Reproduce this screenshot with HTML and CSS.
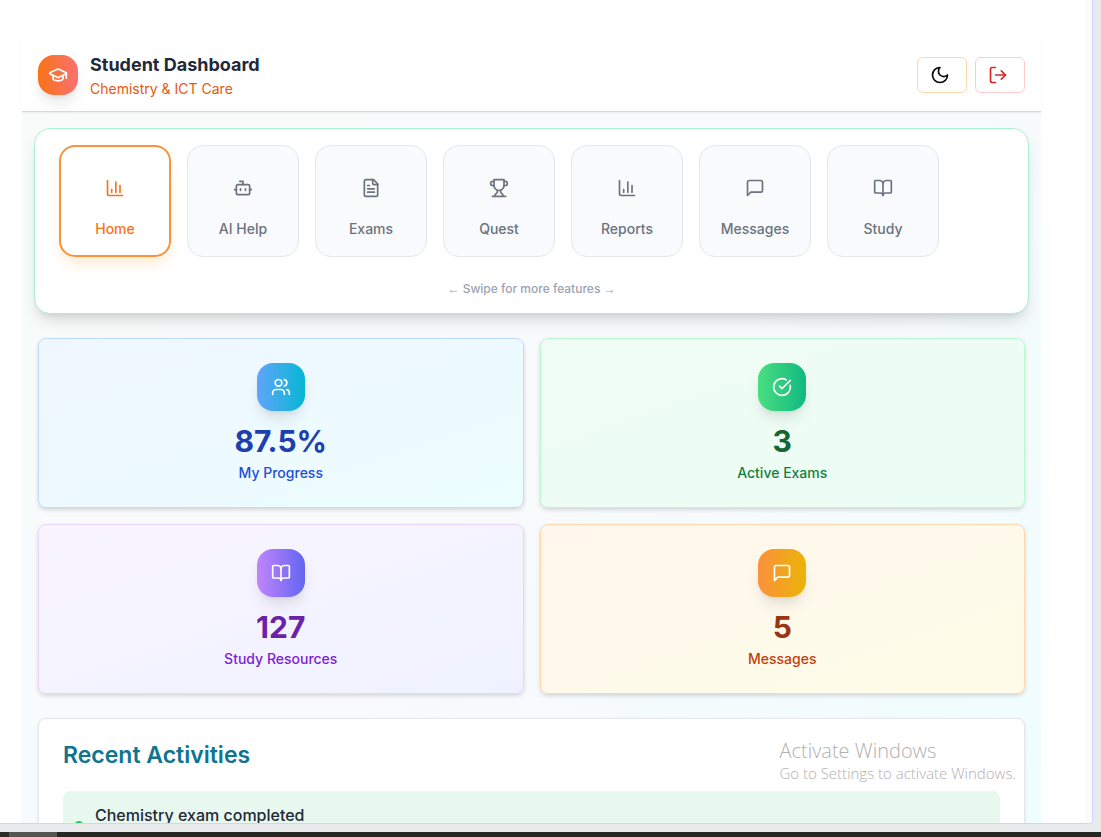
FILE: index.html
```html
<!DOCTYPE html>
<html lang="en">
<head>
<meta charset="utf-8">
<meta name="viewport" content="width=device-width, initial-scale=1">
<title>Student Dashboard</title>
<link rel="stylesheet" href="styles.css">
</head>
<body>
<svg class="defs" aria-hidden="true">
  <symbol id="i-chart" viewBox="0 0 24 24"><path d="M3 3v16a2 2 0 0 0 2 2h16"/><path d="M18 17V9"/><path d="M13 17V5"/><path d="M8 17v-3"/></symbol>
  <symbol id="i-bot" viewBox="0 0 24 24"><path d="M12 8V4H8"/><rect width="16" height="12" x="4" y="8" rx="2"/><path d="M2 14h2"/><path d="M20 14h2"/><path d="M15 13v2"/><path d="M9 13v2"/></symbol>
  <symbol id="i-file" viewBox="0 0 24 24"><path d="M15 2H6a2 2 0 0 0-2 2v16a2 2 0 0 0 2 2h12a2 2 0 0 0 2-2V7Z"/><path d="M14 2v4a2 2 0 0 0 2 2h4"/><path d="M10 9H8"/><path d="M16 13H8"/><path d="M16 17H8"/></symbol>
  <symbol id="i-trophy" viewBox="0 0 24 24"><path d="M6 9H4.5a2.5 2.5 0 0 1 0-5H6"/><path d="M18 9h1.500a2.500 2.500 0 0 0 0-5H18"/><path d="M4 22h16"/><path d="M10 14.660V17c0 .550-.470.980-.970 1.210C7.850 18.750 7 20.240 7 22"/><path d="M14 14.660V17c0 .550.470.980.970 1.210C16.150 18.750 17 20.240 17 22"/><path d="M18 2H6v7a6 6 0 0 0 12 0V2Z"/></symbol>
  <symbol id="i-message" viewBox="0 0 24 24"><path d="M21 15a2 2 0 0 1-2 2H7l-4 4V5a2 2 0 0 1 2-2h14a2 2 0 0 1 2 2z"/></symbol>
  <symbol id="i-book" viewBox="0 0 24 24"><path d="M12 7v14"/><path d="M3 18a1 1 0 0 1-1-1V4a1 1 0 0 1 1-1h5a4 4 0 0 1 4 4 4 4 0 0 1 4-4h5a1 1 0 0 1 1 1v13a1 1 0 0 1-1 1h-6a3 3 0 0 0-3 3 3 3 0 0 0-3-3z"/></symbol>
  <symbol id="i-users" viewBox="0 0 24 24"><path d="M16 21v-2a4 4 0 0 0-4-4H6a4 4 0 0 0-4 4v2"/><circle cx="9" cy="7" r="4"/><path d="M22 21v-2a4 4 0 0 0-3-3.870"/><path d="M16 3.130a4 4 0 0 1 0 7.750"/></symbol>
  <symbol id="i-check" viewBox="0 0 24 24"><path d="M21.801 10A10 10 0 1 1 17 3.335"/><path d="m9 11 3 3L22 4"/></symbol>
  <symbol id="i-cap" viewBox="0 0 24 24"><path d="M21.420 10.922a1 1 0 0 0-.019-1.838L12.830 5.180a2 2 0 0 0-1.660 0L2.600 9.080a1 1 0 0 0 0 1.832l8.570 3.908a2 2 0 0 0 1.660 0z"/><path d="M22 10v6"/><path d="M6 12.500V16a6 3 0 0 0 12 0v-3.500"/></symbol>
  <symbol id="i-moon" viewBox="0 0 24 24"><path d="M12 3a6 6 0 0 0 9 9 9 9 0 1 1-9-9Z"/></symbol>
  <symbol id="i-logout" viewBox="0 0 24 24"><path d="M9 21H5a2 2 0 0 1-2-2V5a2 2 0 0 1 2-2h4"/><path d="m16 17 5-5-5-5"/><path d="M21 12H9"/></symbol>
</svg>

<div class="screen">
  <div class="window">
    <div class="scroller">
      <div class="dashboard">
        <header class="header">
          <div class="logo"><svg class="icon"><use href="#i-cap"/></svg></div>
          <div class="brand">
            <h1 class="brand-title">Student Dashboard</h1>
            <p class="brand-sub">Chemistry &amp; ICT Care</p>
          </div>
          <div class="header-actions">
            <button class="tool tool-theme" type="button" aria-label="Toggle theme"><svg class="icon"><use href="#i-moon"/></svg></button>
            <button class="tool tool-logout" type="button" aria-label="Log out"><svg class="icon"><use href="#i-logout"/></svg></button>
          </div>
        </header>

        <main class="content">
          <nav class="nav-card">
            <div class="nav-list">
              <button class="nav-item active" type="button"><svg class="icon"><use href="#i-chart"/></svg><span>Home</span></button>
              <button class="nav-item" type="button"><svg class="icon"><use href="#i-bot"/></svg><span>AI Help</span></button>
              <button class="nav-item" type="button"><svg class="icon"><use href="#i-file"/></svg><span>Exams</span></button>
              <button class="nav-item" type="button"><svg class="icon"><use href="#i-trophy"/></svg><span>Quest</span></button>
              <button class="nav-item" type="button"><svg class="icon"><use href="#i-chart"/></svg><span>Reports</span></button>
              <button class="nav-item" type="button"><svg class="icon"><use href="#i-message"/></svg><span>Messages</span></button>
              <button class="nav-item" type="button"><svg class="icon"><use href="#i-book"/></svg><span>Study</span></button>
            </div>
            <p class="nav-hint"><span class="arrow">←</span> Swipe for more features <span class="arrow">→</span></p>
          </nav>

          <section class="stats">
            <article class="stat blue">
              <div class="stat-icon"><svg class="icon"><use href="#i-users"/></svg></div>
              <p class="stat-value">87.5%</p>
              <p class="stat-label">My Progress</p>
            </article>
            <article class="stat green">
              <div class="stat-icon"><svg class="icon"><use href="#i-check"/></svg></div>
              <p class="stat-value">3</p>
              <p class="stat-label">Active Exams</p>
            </article>
            <article class="stat purple">
              <div class="stat-icon"><svg class="icon"><use href="#i-book"/></svg></div>
              <p class="stat-value">127</p>
              <p class="stat-label">Study Resources</p>
            </article>
            <article class="stat orange">
              <div class="stat-icon"><svg class="icon"><use href="#i-message"/></svg></div>
              <p class="stat-value">5</p>
              <p class="stat-label">Messages</p>
            </article>
          </section>

          <section class="activities">
            <h2 class="activities-title">Recent Activities</h2>
            <div class="activity">
              <span class="activity-dot"></span>
              <p class="activity-text">Chemistry exam completed</p>
            </div>
          </section>
        </main>
      </div>
    </div>
    <div class="track"></div>
  </div>
  <div class="taskbar"></div>
  <div class="watermark">
    <p class="watermark-title">Activate Windows</p>
    <p class="watermark-text">Go to Settings to activate Windows.</p>
  </div>
</div>
</body>
</html>
```
FILE: styles.css
```css
* { box-sizing: border-box; margin: 0; }
body { font-family: Inter, "Liberation Sans", sans-serif; font-size: 16px; line-height: 24px; color: #1f2937; }
button { font: inherit; cursor: pointer; }
.defs { position: absolute; width: 0; height: 0; }
.icon { width: 20px; height: 20px; flex: none; fill: none; stroke: currentColor; stroke-width: 2; stroke-linecap: round; stroke-linejoin: round; }

/* Desktop frame */
.screen { position: relative; display: flex; flex-direction: column; height: 100vh; overflow: hidden; background: #e9eaec; }
.window { flex: 1; min-height: 0; display: flex; margin: 0 8px 8px 0; border: solid #d6d1fb; border-width: 0 1px 1px 0; border-radius: 0 0 4px 0; overflow: hidden; background: #fff; }
.scroller { flex: 1; min-width: 0; overflow: hidden; padding: 39px 44px 0 22px; }
.track { width: 7px; background: #fbfbfc; }
.taskbar { flex: none; height: 5px; background: linear-gradient(90deg, #2a2b27 9px, #555651 9px 57px, #262722 57px); }

.dashboard { min-height: 1020px; background: linear-gradient(to bottom right, #fafafa, #f8fafc 50%, #ecfeff); }

/* Header */
.header { position: relative; display: flex; align-items: center; gap: 12px; padding: 12px 16px; background: #fff; border-bottom: 1px solid #a7f3d0; box-shadow: 0 1px 2px rgba(0, 0, 0, .06); }
.logo { display: grid; place-items: center; width: 40px; height: 40px; border-radius: 16px; color: #fff; background: linear-gradient(90deg, #f97316, #f87171); box-shadow: 0 10px 15px -3px rgba(0, 0, 0, .1), 0 4px 6px -4px rgba(0, 0, 0, .1); }
.brand { flex: 1; }
.brand-title { font-size: 18px; line-height: 28px; font-weight: 700; }
.brand-sub { font-size: 14px; line-height: 20px; color: #ea580c; }
.header-actions { display: flex; gap: 8px; }
.tool { display: flex; align-items: center; width: 50px; height: 36px; padding: 0 12px; border: 1px solid #fed7aa; border-radius: 6px; background: #fff; color: #0a0a0a; }
.tool-logout { border-color: #fecaca; color: #dc2626; }

.content { padding: 16px; }

/* Navigation */
.nav-card { margin: 0 -4px 24px; padding: 16px 24px; border: 1px solid #a7f3d0; border-radius: 16px; background: #fff; box-shadow: 0 10px 15px -3px rgba(0, 0, 0, .12), 0 4px 6px -4px rgba(0, 0, 0, .12); }
.nav-list { display: flex; gap: 16px; }
.nav-item { display: flex; flex-direction: column; align-items: center; justify-content: center; gap: 21px; width: 112px; height: 112px; padding: 14px 8px 0; border: 1px solid #e5e7eb; border-radius: 16px; background: #f9fafb; color: #6b7280; font-size: 14px; line-height: 20px; font-weight: 500; }
.nav-item.active { border: 2px solid #fb923c; background: #fff; color: #f97316; box-shadow: 0 10px 15px -3px #ffedd5, 0 4px 6px -4px #ffedd5; }
.nav-hint { margin-top: 24px; text-align: center; font-size: 12px; line-height: 16px; font-weight: 500; color: #9ca3af; }
.arrow { font-family: "Liberation Sans", sans-serif; line-height: 1; }

/* Statistics */
.stats { display: grid; grid-template-columns: 1fr 1fr; gap: 16px; margin-bottom: 24px; }
.stat { display: flex; flex-direction: column; align-items: center; padding: 24px; border: 1px solid; border-radius: 8px; box-shadow: 0 2px 4px rgba(0, 0, 0, .14); }
.stat-icon { display: grid; place-items: center; width: 48px; height: 48px; margin-bottom: 12px; border-radius: 16px; color: #fff; box-shadow: 0 10px 15px -3px rgba(0, 0, 0, .1), 0 4px 6px -4px rgba(0, 0, 0, .1); }
.stat-value { margin-bottom: 4px; font-size: 30px; line-height: 36px; font-weight: 700; }
.stat-label { font-size: 14px; line-height: 20px; font-weight: 500; }
.blue { border-color: #bfdbfe; background: linear-gradient(to bottom right, #eff6ff, #ecfeff); color: #1e40af; }
.blue .stat-icon { background: linear-gradient(90deg, #60a5fa, #06b6d4); }
.blue .stat-label { color: #1d4ed8; }
.green { border-color: #bbf7d0; background: linear-gradient(to bottom right, #f0fdf4, #ecfdf5); color: #166534; }
.green .stat-icon { background: linear-gradient(90deg, #4ade80, #10b981); }
.green .stat-label { color: #15803d; }
.purple { border-color: #e9d5ff; background: linear-gradient(to bottom right, #faf5ff, #eef2ff); color: #6b21a8; }
.purple .stat-icon { background: linear-gradient(90deg, #c084fc, #6366f1); }
.purple .stat-label { color: #7e22ce; }
.orange { border-color: #fed7aa; background: linear-gradient(to bottom right, #fff7ed, #fefce8); color: #9a3412; }
.orange .stat-icon { background: linear-gradient(90deg, #fb923c, #eab308); }
.orange .stat-label { color: #c2410c; }

/* Activities */
.activities { padding: 24px; border: 1px solid #e5e7eb; border-radius: 8px; background: #fff; box-shadow: 0 1px 3px rgba(0, 0, 0, .1); }
.activities-title { margin-bottom: 24px; font-size: 23px; line-height: 24px; font-weight: 600; color: #0e7490; }
.activity { display: flex; align-items: center; gap: 12px; min-height: 68px; padding: 12px; border-radius: 8px; background: #e7f8ee; }
.activity-dot { width: 8px; height: 8px; border-radius: 50%; background: #22c55e; }
.activity-text { align-self: flex-start; font-weight: 500; }

/* System notice over the desktop */
.watermark { position: absolute; right: 85px; bottom: 54px; color: #b0b0b0; font-family: "Open Sans", "Noto Sans", sans-serif; font-weight: 300; pointer-events: none; }
.watermark-title { font-size: 20px; line-height: 24px; }
.watermark-text { font-size: 15px; line-height: 20px; }
```
